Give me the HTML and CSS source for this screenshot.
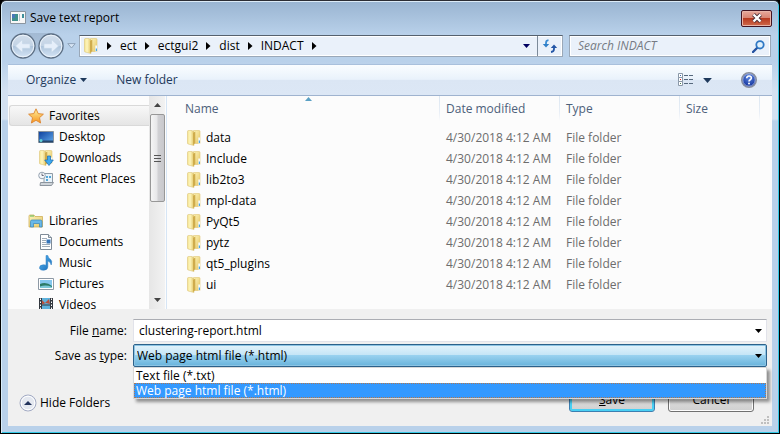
FILE: index.html
```html
<!DOCTYPE html>
<html lang="en">
<head>
<meta charset="utf-8">
<title>Save text report</title>
<link rel="stylesheet" href="styles.css">
</head>
<body>
<svg class="defs" aria-hidden="true">
  <defs>
    <linearGradient id="gFolder" x1="0" x2="1" y1="0" y2="1"><stop offset="0" stop-color="#fdf3b8"/><stop offset="1" stop-color="#e6c868"/></linearGradient>
    <linearGradient id="gFold" x1="0" x2="1"><stop offset="0" stop-color="#f6e48e"/><stop offset=".4" stop-color="#fdf5bd"/><stop offset="1" stop-color="#e2c566"/></linearGradient>
    <linearGradient id="gStar" x1="0" x2="0" y1="0" y2="1"><stop offset="0" stop-color="#fff3a0"/><stop offset="1" stop-color="#f7941d"/></linearGradient>
    <linearGradient id="gBlue" x1="0" x2="1" y1="0" y2="1"><stop offset="0" stop-color="#0d3f9c"/><stop offset="1" stop-color="#5fa8ea"/></linearGradient>
    <linearGradient id="gNote" x1="0" x2="1" y1="0" y2="1"><stop offset="0" stop-color="#59b9f2"/><stop offset="1" stop-color="#1467b8"/></linearGradient>
    <linearGradient id="gNav" x1="0" x2="0" y1="0" y2="1"><stop offset="0" stop-color="#d3dfec"/><stop offset=".48" stop-color="#c3d3e5"/><stop offset=".5" stop-color="#aec4db"/><stop offset="1" stop-color="#d6e6f7"/></linearGradient>
    <radialGradient id="gHelp" cx=".5" cy=".3" r=".7"><stop offset="0" stop-color="#5b86e0"/><stop offset="1" stop-color="#0c2a94"/></radialGradient>
    <symbol id="folder" viewBox="0 0 16 16">
      <path d="M7.500.500h5.500q1 0 1 1V13.500H7.500z" fill="url(#gFolder)" stroke="#e0c673" stroke-width=".6"/>
      <path d="M1.500 1.500q0-1 1-1h3.500l2 1.500v13.500L2.200 14q-.7 0-.7-1z" fill="url(#gFold)" stroke="#dcc478" stroke-width=".6"/>
      <path d="M7 3l2.300-1.500V13L7 15z" fill="#cfac4c"/>
      <path d="M12.300 7.500h1.700v6h-1.700z" fill="#f4faff"/><path d="M12.800 10.500h1.200v2.500h-1.200z" fill="#48a7e8"/>
    </symbol>
    <symbol id="down" viewBox="0 0 7 4"><path d="M0 0h7L3.500 4z" fill="currentColor"/></symbol>
    <symbol id="next" viewBox="0 0 5 8"><path d="M0 0l4.500 4L0 8z" fill="currentColor"/></symbol>
  </defs>
</svg>
<div class="window">
  <header class="titlebar">
    <svg class="app-icon" viewBox="0 0 16 14"><path d="M.5.500h15v12H.500z" fill="#f7f7f7" stroke="#8b959f"/><path d="M2 3h6v7H2z" fill="#3f8f8c"/><path d="M2 3h3v4H2z" fill="#4a78b8"/><path d="M9 3h1v7H9z" fill="#b8c2c8"/><path d="M12 3h2v4h-2z" fill="#3f8f9a"/></svg>
    <h1 class="title">Save text report</h1>
    <button class="close" type="button" aria-label="Close"><svg width="12" height="10" viewBox="0 0 12 10"><path d="M2.500 1.500l7 7m0-7l-7 7" stroke="#4a3038" stroke-width="4"/><path d="M2.500 1.500l7 7m0-7l-7 7" stroke="#fff" stroke-width="2.400"/></svg></button>
  </header>

  <nav class="navbar" aria-label="Location">
    <div class="history">
      <div class="pill">
        <button class="round" type="button" aria-label="Back"><svg viewBox="0 0 26 26"><circle cx="13" cy="13" r="12" fill="url(#gNav)" stroke="#5d6f84" stroke-width="1.300"/><circle cx="13" cy="13" r="10.800" fill="none" stroke="#edf4fb"/><path d="M5.500 13l7-6.500v4.200h7.500v4.600h-7.500v4.200z" fill="#e6effa" stroke="#c4d6e8" stroke-width=".6"/></svg></button>
        <button class="round" type="button" aria-label="Forward"><svg viewBox="0 0 26 26"><circle cx="13" cy="13" r="12" fill="url(#gNav)" stroke="#5d6f84" stroke-width="1.300"/><circle cx="13" cy="13" r="10.800" fill="none" stroke="#edf4fb"/><path d="M20.500 13l-7-6.500v4.200H6v4.600h7.500v4.200z" fill="#e6effa" stroke="#c4d6e8" stroke-width=".6"/></svg></button>
      </div>
      <button class="recent" type="button" aria-label="Recent pages"><svg width="9" height="6" viewBox="0 0 9 6"><path d="M.8.600h7.400L4.500 5z" fill="#d5e4f3" stroke="#8fa3ba"/></svg></button>
    </div>
    <div class="address">
      <svg class="icon" aria-hidden="true"><use href="#folder"/></svg>
      <ol class="crumbs">
        <li><svg class="arrow"><use href="#next"/></svg><a href="#">ect</a></li>
        <li><svg class="arrow"><use href="#next"/></svg><a href="#">ectgui2</a></li>
        <li><svg class="arrow"><use href="#next"/></svg><a href="#">dist</a></li>
        <li><svg class="arrow"><use href="#next"/></svg><a href="#">INDACT</a></li>
        <li><svg class="arrow"><use href="#next"/></svg></li>
      </ol>
      <button class="drop" type="button" aria-label="Previous locations"><svg class="caret"><use href="#down"/></svg></button>
      <button class="refresh" type="button" aria-label="Refresh"><svg width="16" height="14" viewBox="0 0 16 14"><path d="M6.500 1.200Q4 1.500 4 4v1.500" fill="none" stroke="#3a8cd2" stroke-width="1.800"/><path d="M.8 5h6.400L4 8.500z" fill="#2f7fc8"/><path d="M9 13q3-.3 3-3V8.500" fill="none" stroke="#2456a6" stroke-width="1.800"/><path d="M8.800 9h6.400L12 5.500z" fill="#2456a6"/></svg></button>
    </div>
    <div class="search">
      <input type="text" aria-label="Search INDACT" placeholder="Search INDACT">
      <svg width="13" height="13" viewBox="0 0 13 13"><path d="M1 12l4.500-4.500" stroke="#2552a0" stroke-width="2.400" stroke-linecap="round"/><circle cx="8" cy="4.800" r="3.700" fill="#dff0fc" stroke="#2f78c4" stroke-width="1.800"/></svg>
    </div>
  </nav>

  <div class="toolbar" role="toolbar">
    <button class="organize" type="button">Organize<svg class="caret"><use href="#down"/></svg></button>
    <button type="button">New folder</button>
    <button class="views" type="button" aria-label="Change your view"><svg width="16" height="14" viewBox="0 0 16 14"><g fill="#fff" stroke="#8a98a8"><path d="M.5.500h4v4h-4zM.500 4.500h4v4h-4zM.500 8.500h4v4h-4z"/></g><path d="M2 2h1v1H2z" fill="#3a6ab0"/><path d="M2 6h1v1H2z" fill="#d02020"/><path d="M2 10h1v1H2z" fill="#4a7a50"/><path d="M6 2.500h4m1 0h4M6 6.500h4m1 0h4M6 10.500h4m1 0h4" stroke="#56687c"/></svg><svg class="caret wide"><use href="#down"/></svg></button>
    <button class="help" type="button" aria-label="Help"><svg width="16" height="16" viewBox="0 0 16 16"><circle cx="8" cy="8" r="7.300" fill="url(#gHelp)" stroke="#8a8f9a" stroke-width="1.400"/><circle cx="8" cy="8" r="6.200" fill="none" stroke="#c3cfe8" stroke-width=".7"/><path d="M5.700 6.200q.2-2.200 2.400-2.200t2.300 2q0 1-1.200 1.700T8 9.600" fill="none" stroke="#fff" stroke-width="1.600"/><circle cx="8" cy="11.600" r="1" fill="#fff"/></svg></button>
  </div>

  <main class="content">
    <aside class="sidebar">
      <div class="tree">
        <a class="node root selected" href="#"><svg class="icon" viewBox="0 0 16 16"><path d="M8 .8l2.200 4.800 5.200.6-3.900 3.500 1.100 5.300L8 12.300 3.400 15l1.100-5.300L.6 6.200l5.200-.6z" fill="url(#gStar)" stroke="#dc8430" stroke-width=".9" stroke-linejoin="round"/></svg>Favorites</a>
        <a class="node" href="#"><svg class="icon" viewBox="0 0 16 16"><path d="M.5 2.500h15v11H.500z" fill="url(#gBlue)" stroke="#8a949e"/><path d="M1 11.500h14v2H1z" fill="#25466c"/><circle cx="3" cy="11.500" r="1.500" fill="#5fd0d6"/></svg>Desktop</a>
        <a class="node" href="#"><svg class="icon" viewBox="0 0 16 16"><use href="#folder"/><path d="M9.500 6h3v4h2.800L11 15.500 6.700 10h2.800z" fill="#3fa9ee" stroke="#176ab0" stroke-width=".7"/></svg>Downloads</a>
        <a class="node" href="#"><svg class="icon" viewBox="0 0 16 16"><path d="M6 2.500h8.500v9H6z" fill="#e9f3fa" stroke="#8f9ba6"/><path d="M8 5h2v2H8zM11 5h2v2h-2zM8 8h2v2H8z" fill="#55a7d8"/><path d="M2.500 11.500h13l-2 3H2z" fill="#ced4d9" stroke="#8c959e"/><circle cx="4" cy="4.500" r="3.300" fill="#f4f7fa" stroke="#95a2af"/><path d="M4 2.500v2h1.700" fill="none" stroke="#667"/></svg>Recent Places</a>
        <a class="node root group" href="#"><svg class="icon" viewBox="0 0 16 16"><path d="M1 3q0-1 1-1h4l1 1.500h7.500V14H1z" fill="url(#gFolder)" stroke="#c9a648" stroke-width=".7"/><path d="M2 3h4" stroke="#58b95a"/><path d="M2.500 14V8.500q0-1.500 1.500-1.500h8.500Q14 7 14 8.500V14h-2.500v-3.500h-6V14z" fill="#69b8e8" stroke="#3885bb" stroke-width=".7"/></svg>Libraries</a>
        <a class="node" href="#"><svg class="icon" viewBox="0 0 16 16"><path d="M2.500.500h8l3 3v12h-11z" fill="#fff" stroke="#808c98"/><path d="M10.500.500v3h3" fill="#dce4ea" stroke="#808c98"/><path d="M4 4.500h5M4 6.500h4M4 8.500h4M4 10.500h8M4 12.500h8" stroke="#a0acb8"/><path d="M8.500 5.500h4v4h-4z" fill="#3474b8"/></svg>Documents</a>
        <a class="node" href="#"><svg class="icon" viewBox="0 0 16 16"><path d="M8 .500h1.800q.3 2.300 2.600 3.700 2.200 1.800.8 5.800-.7-3.500-3.400-4V12q0 3-4 3.200-4.300.2-4.300-2.400Q1.500 10 5.300 9.800 7 9.700 8 10.200z" fill="url(#gNote)" stroke="#2c7cc0" stroke-width=".5"/></svg>Music</a>
        <a class="node" href="#"><svg class="icon" viewBox="0 0 16 16"><path d="M.5 2.500h15v11H.500z" fill="#fff" stroke="#8d99a5"/><path d="M2 4h12v8H2z" fill="#84c7ee"/><path d="M2 8q6-3 12 2v2H2z" fill="#2c7a66"/><path d="M2 10.500q6-2 12 .5v1H2z" fill="#7cc8d8"/></svg>Pictures</a>
        <a class="node" href="#"><svg class="icon" viewBox="0 0 16 16"><path d="M1 1h14v14H1z" fill="#33383f"/><path d="M4 1h8v6.500H4zM4 8.500h8V15H4z" fill="#5eb2dc"/><path d="M4 3l3 3 4-4 1 5-4-1-4 1.500z" fill="#b8503c"/><path d="M2.500 1.500v14M13.500 1.500v14" stroke="#fff" stroke-dasharray="1.500 1.500"/></svg>Videos</a>
      </div>
      <div class="scrollbar" aria-hidden="true">
        <svg width="7" height="4" viewBox="0 0 7 4"><path d="M0 4h7L3.500 0z" fill="#444"/></svg>
        <div class="thumb"><i></i><i></i><i></i></div>
        <svg class="end" width="7" height="4"><use href="#down"/></svg>
      </div>
    </aside>
    <section class="files">
      <table>
        <colgroup><col><col class="c-mid"><col class="c-mid"><col class="c-size"><col class="c-rest"></colgroup>
        <thead><tr><th>Name<svg class="sort" width="7" height="4" viewBox="0 0 7 4"><path d="M0 4h7L3.500 0z" fill="#5aa0c4"/></svg></th><th>Date modified</th><th>Type</th><th>Size</th><th></th></tr></thead>
        <tbody>
          <tr><td><svg class="icon"><use href="#folder"/></svg>data</td><td>4/30/2018 4:12 AM</td><td>File folder</td><td></td><td></td></tr>
          <tr><td><svg class="icon"><use href="#folder"/></svg>Include</td><td>4/30/2018 4:12 AM</td><td>File folder</td><td></td><td></td></tr>
          <tr><td><svg class="icon"><use href="#folder"/></svg>lib2to3</td><td>4/30/2018 4:12 AM</td><td>File folder</td><td></td><td></td></tr>
          <tr><td><svg class="icon"><use href="#folder"/></svg>mpl-data</td><td>4/30/2018 4:12 AM</td><td>File folder</td><td></td><td></td></tr>
          <tr><td><svg class="icon"><use href="#folder"/></svg>PyQt5</td><td>4/30/2018 4:12 AM</td><td>File folder</td><td></td><td></td></tr>
          <tr><td><svg class="icon"><use href="#folder"/></svg>pytz</td><td>4/30/2018 4:12 AM</td><td>File folder</td><td></td><td></td></tr>
          <tr><td><svg class="icon"><use href="#folder"/></svg>qt5_plugins</td><td>4/30/2018 4:12 AM</td><td>File folder</td><td></td><td></td></tr>
          <tr><td><svg class="icon"><use href="#folder"/></svg>ui</td><td>4/30/2018 4:12 AM</td><td>File folder</td><td></td><td></td></tr>
        </tbody>
      </table>
    </section>
  </main>

  <form class="footer">
    <div class="fields">
      <label for="name">File <u>n</u>ame:</label>
      <div class="field"><input id="name" type="text" value="clustering-report.html"><svg class="caret"><use href="#down"/></svg></div>
      <label for="type">Save as <u>t</u>ype:</label>
      <div class="field">
        <select id="type"><option>Text file (*.txt)</option><option selected>Web page html file (*.html)</option></select><svg class="caret"><use href="#down"/></svg>
        <ul class="popup"><li>Text file (*.txt)</li><li class="current">Web page html file (*.html)</li></ul>
      </div>
    </div>
    <div class="actions">
      <button class="hide" type="button"><svg width="18" height="18" viewBox="0 0 18 18"><circle cx="9" cy="9" r="8" fill="#e4e8f0" stroke="#a3abc4"/><circle cx="9" cy="9" r="6.800" fill="none" stroke="#fff"/><path d="M5 11h8L9 7z" fill="#22335c"/></svg>Hide Folders</button>
      <button class="push default" type="submit"><span><u>S</u>ave</span></button>
      <button class="push" type="button">Cancel</button>
    </div>
    <svg class="grip" width="8" height="8" viewBox="0 0 8 8" aria-hidden="true"><path d="M6 0h2v2H6zM3 3h2v2H3zM6 3h2v2H6zM0 6h2v2H0zM3 6h2v2H3zM6 6h2v2H6z" fill="#bfbfbf"/></svg>
  </form>
</div>
</body>
</html>
```
FILE: styles.css
```css
* { box-sizing: border-box; }
body {
  margin: 0;
  background: #000;
  color: #000;
  font: 12px/16px "Open Sans", "Noto Sans", sans-serif;
}
button, input, select { font: inherit; color: inherit; margin: 0; }
button { border: 0; padding: 0; background: none; }
a { color: inherit; text-decoration: none; }
svg { flex: none; display: block; }
ol, ul { list-style: none; margin: 0; padding: 0; }
.defs { position: absolute; width: 0; height: 0; }
.icon { width: 16px; height: 16px; }
.caret { width: 7px; height: 4px; }
.caret.wide { width: 9px; height: 5px; }

.window {
  height: 100vh;
  display: flex;
  flex-direction: column;
  padding: 0 6px 7px;
  border: 1px solid #000;
  border-top-color: #2b2c33;
  border-radius: 6px 6px 0 0;
  box-shadow: inset 1px 0 #d9edf9, inset -1px -1px #35c9e6, inset 0 1px #dcebf7;
  background: linear-gradient(#99b4d1, #b9d1ea 34px, #b9d1ea 60px, #d3e1f1 90px, #d3e1f1 118px, #b9d1ea 120px);
}
.titlebar {
  height: 34px;
  display: flex;
  align-items: center;
  padding: 0 1px 0 3px;
}
.app-icon { width: 16px; height: 14px; }
.title { flex: 1; margin: 0 0 0 4px; font-size: 12px; font-weight: 400; }
.close {
  width: 31px;
  height: 17px;
  display: grid;
  place-items: center;
  border: 1px solid #431422;
  border-radius: 2px;
  box-shadow: inset 0 0 0 1px #e8b4a8;
  background: linear-gradient(#e8a99c, #d98573 45%, #b83a20 50%, #cf6a4c);
}

.navbar {
  height: 29px;
  display: flex;
  align-items: flex-start;
  padding-right: 2px;
}
.history { width: 72px; display: flex; align-items: center; height: 22px; padding-left: 3px; }
.pill {
  display: flex;
  gap: 2px;
  border-radius: 13px;
  background: linear-gradient(#a3bad3, #a9c1db 60%, #b9d1ea 80%);
}
.round { width: 26px; height: 26px; }
.round svg { width: 26px; height: 26px; }
.recent { margin-left: 3px; }
.address, .search {
  height: 22px;
  display: flex;
  align-items: center;
  border: 1px solid #9aa8b8;
  border-top-color: #55616e;
  box-shadow: inset 0 0 0 1px #fff;
  background: #eaf1fa;
}
.address { flex: 1; padding-left: 3px; margin-right: 6px; }
.crumbs { flex: 1; display: flex; }
.crumbs li { display: flex; align-items: center; gap: 8px; padding-left: 8px; }
.arrow { width: 5px; height: 8px; }
.drop { width: 21px; height: 20px; display: grid; place-items: center; color: #000060; }
.refresh { width: 25px; height: 20px; display: grid; place-items: center; border-left: 1px solid #7c8a99; }
.search { width: 202px; padding: 0 5px 0 8px; }
.search input { flex: 1; min-width: 0; border: 0; padding: 0; background: none; outline: 0; }
.search input::placeholder { color: #767b84; font-style: italic; opacity: 1; }

.toolbar {
  height: 32px;
  display: flex;
  align-items: center;
  margin: 0 1px;
  padding: 0 15px 0 18px;
  border-top: 1px solid #a9c0dc;
  border-bottom: 1px solid #9fb3cf;
  color: #1e395b;
  background: linear-gradient(#fafdff, #e9f2fb 48%, #dbe6f4 50%, #dce7f5);
}
.toolbar button { display: flex; align-items: center; }
.toolbar .organize { gap: 4px; margin-right: 29px; }
.toolbar .views { gap: 9px; margin-left: auto; margin-right: 29px; }

.content { flex: 1; min-height: 0; display: flex; margin: 0 1px; background: #fcfcfc; }
.sidebar { width: 159px; display: flex; border-right: 1px solid #d6e5f5; overflow: hidden; }
.tree { flex: 1; padding: 9px 0 0 1px; }
.node { display: flex; align-items: center; gap: 5px; height: 21px; padding-left: 29px; }
.node.root { padding-left: 19px; }
.node.selected {
  padding-left: 18px;
  border: 1px solid #d9d9d9;
  border-right: 0;
  border-radius: 3px 0 0 3px;
  background: linear-gradient(#f8f8f8, #e5e5e5);
}
.group { margin-top: 21px; }
.scrollbar {
  width: 16px;
  margin-right: 1px;
  display: flex;
  flex-direction: column;
  align-items: center;
  padding: 7px 0;
  color: #444;
  background: linear-gradient(90deg, #e6e6e6, #f2f2f2);
}
.thumb {
  width: 15px;
  height: 88px;
  margin-top: 7px;
  display: flex;
  flex-direction: column;
  align-items: center;
  justify-content: center;
  gap: 2px;
  border: 1px solid #979797;
  border-radius: 2px;
  background: linear-gradient(90deg, #f5f5f5, #e6e6e8 48%, #d1d1d4 52%, #c8c8cc);
}
.thumb i { width: 7px; height: 1px; background: #555; }
.end { margin-top: auto; }

.files { flex: 1; min-width: 0; overflow: hidden; }
table { width: 100%; border-collapse: collapse; table-layout: fixed; }
.c-mid { width: 120px; }
.c-size { width: 80px; }
.c-rest { width: 13px; }
th {
  height: 31px;
  padding: 5px 0 0 18px;
  text-align: left;
  vertical-align: top;
  font-weight: 400;
  color: #4c607a;
  position: relative;
}
th + th { padding-left: 7px; background: linear-gradient(#dce6f1, #e8eef6 16px, #fcfcfc 25px) no-repeat left / 1px 100%; }
.sort { position: absolute; top: 1px; left: 50%; margin-left: 2px; }
td { height: 21px; padding: 0 0 0 7px; color: #6d6d6d; white-space: nowrap; }
td:first-child { display: flex; align-items: center; gap: 4px; padding-left: 19px; color: #000; }

.footer { position: relative; margin: 0 1px; padding: 10px 5px 14px 0; background: #f0f0f0; }
.fields { display: grid; grid-template-columns: 119px 1fr; column-gap: 6px; row-gap: 2px; align-items: center; }
.fields label { text-align: right; }
.field { position: relative; }
.field > .caret { position: absolute; right: 5px; top: 10px; pointer-events: none; }
.field input, .field select { display: block; width: 100%; height: 23px; }
.field input { border: 1px solid #e2e3ea; border-top-color: #abadb3; padding: 0 5px; background: #fff; }
.field select {
  appearance: none;
  padding: 0 3px;
  border: 1px solid #2c628b;
  border-radius: 2px;
  box-shadow: inset 0 0 0 1px #8cc4e4;
  background: linear-gradient(#e3f3fb, #c4e5f6 48%, #98d1ef 50%, #68b3db);
}
.popup {
  position: absolute;
  z-index: 1;
  top: 100%;
  left: 0;
  right: 0;
  border: 1px solid #d8d8d8;
  background: #fff;
  box-shadow: 3px 3px 3px #0006;
}
.popup li { height: 15px; line-height: 13px; border: 1px solid transparent; padding: 0 1px; }
.popup .current { color: #fff; background: #3399ff; border: 1px dotted #b07850; }
.actions { display: flex; align-items: flex-end; gap: 13px; margin: 21px 13px 0 11px; }
.hide { display: flex; align-items: center; gap: 3px; margin-right: auto; }
.push {
  width: 86px;
  height: 24px;
  border: 1px solid #707070;
  border-radius: 3px;
  box-shadow: inset 0 0 0 1px #fcfcfc;
  background: linear-gradient(#f2f2f2, #ebebeb 50%, #ddd 50%, #cfcfcf);
}
.default { border-color: #3c7fb1; box-shadow: inset 0 0 0 2px #48d0f4; }
.grip { position: absolute; right: 3px; bottom: 2px; }
```
